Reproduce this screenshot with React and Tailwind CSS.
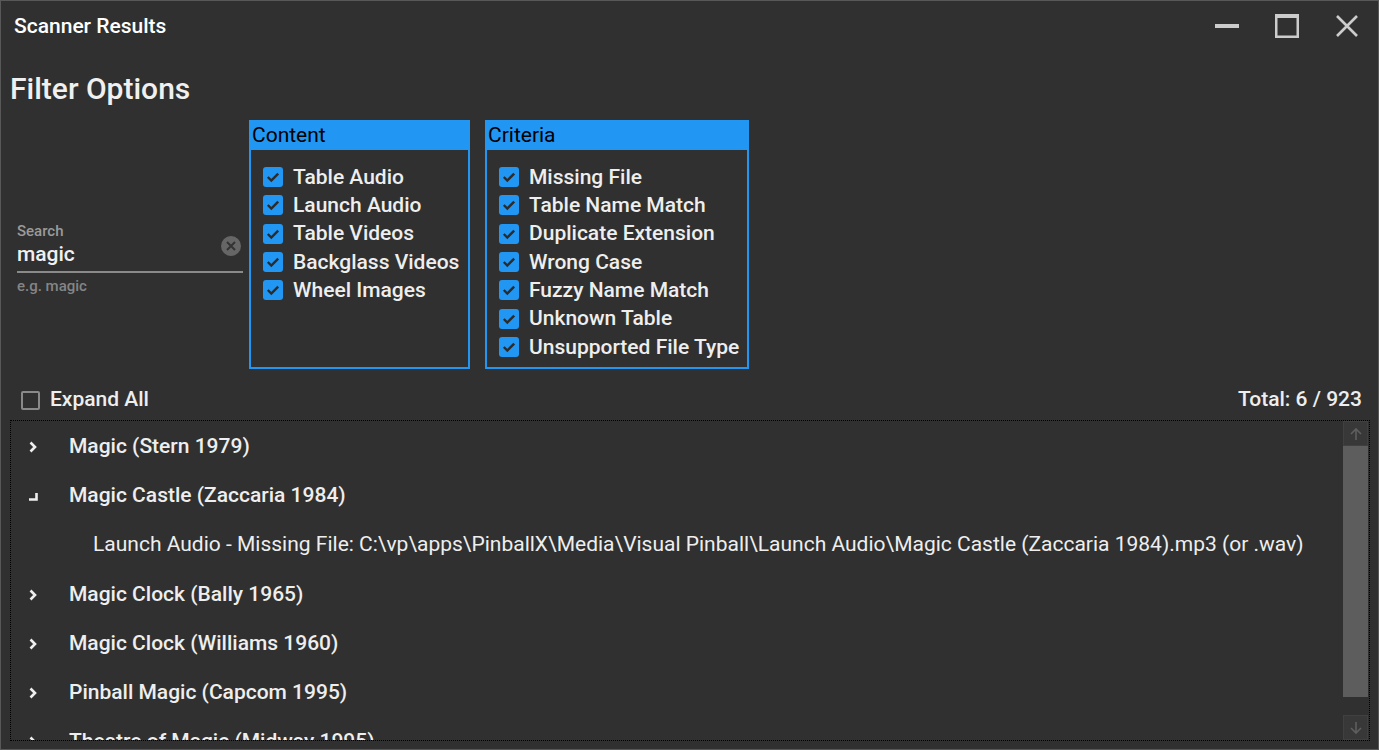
import { useState } from 'react'

const contentItems = ['Table Audio', 'Launch Audio', 'Table Videos', 'Backglass Videos', 'Wheel Images']
const criteriaItems = [
  'Missing File',
  'Table Name Match',
  'Duplicate Extension',
  'Wrong Case',
  'Fuzzy Name Match',
  'Unknown Table',
  'Unsupported File Type',
]

const tables = [
  { name: 'Magic (Stern 1979)' },
  {
    name: 'Magic Castle (Zaccaria 1984)',
    open: true,
    issues: [
      'Launch Audio - Missing File: C:\\vp\\apps\\PinballX\\Media\\Visual Pinball\\Launch Audio\\Magic Castle (Zaccaria 1984).mp3 (or .wav)',
    ],
  },
  { name: 'Magic Clock (Bally 1965)' },
  { name: 'Magic Clock (Williams 1960)' },
  { name: 'Pinball Magic (Capcom 1995)' },
  { name: 'Theatre of Magic (Midway 1995)' },
]

function Check() {
  return (
    <span className="w-[20px] h-[20px] rounded-[3px] bg-[#2196f3] flex items-center justify-center shrink-0">
      <svg width="20" height="20" viewBox="0 0 20 20">
        <path d="M4.8 10 L8.3 13.5 L15.2 6.6" fill="none" stroke="#2b2b2b" strokeWidth="2.4" />
      </svg>
    </span>
  )
}

function GroupBox({ title, items, width }) {
  return (
    <div className={`${width} h-[249px] border-2 border-[#2196f3] flex flex-col`}>
      <div className="h-[30px] bg-[#2196f3] text-black text-[21px] leading-[30px] pl-[3px] -mx-[2px] -mt-[2px]">
        {title}
      </div>
      <div className="pt-[13px] pl-[12px] flex flex-col">
        {items.map(item => (
          <div key={item} className="h-[28.33px] flex items-center gap-[10px]">
            <Check />
            <span className="text-[21px] font-medium text-[#eeeeee] leading-none whitespace-nowrap">{item}</span>
          </div>
        ))}
      </div>
    </div>
  )
}

export default function App() {
  const [search] = useState('magic')

  return (
    <div
      className="w-[1379px] h-[750px] bg-[#303030] border border-[#585858] flex flex-col overflow-hidden text-[#eeeeee]"
      style={{ fontFamily: 'Roboto, "Noto Sans", sans-serif' }}
    >
      {/* title bar */}
      <div className="h-[50px] flex items-center pl-[13px] pt-[2px] shrink-0">
        <span className="text-[21px] font-medium text-white">Scanner Results</span>
        <div className="ml-auto flex items-center h-full -mt-[2px]">
          <div className="w-[60px] flex justify-center">
            <svg width="26" height="26" viewBox="0 0 26 26">
              <rect x="1" y="11" width="24" height="4" fill="#cccccc" />
            </svg>
          </div>
          <div className="w-[60px] flex justify-center">
            <svg width="26" height="26" viewBox="0 0 26 26">
              <rect x="2.25" y="2.25" width="21.5" height="21.5" fill="none" stroke="#cccccc" strokeWidth="2.5" />
              <rect x="1" y="1" width="24" height="4" fill="#cccccc" />
            </svg>
          </div>
          <div className="w-[60px] flex justify-center mr-[1px]">
            <svg width="24" height="24" viewBox="0 0 24 24">
              <path d="M2 2 L22 22 M22 2 L2 22" stroke="#cccccc" strokeWidth="2.6" />
            </svg>
          </div>
        </div>
      </div>

      <div className="pl-[9px] pt-[20px] text-[30px] font-medium leading-[36px] text-[#f0f0f0]">Filter Options</div>

      {/* filters */}
      <div className="flex mt-[13px] shrink-0">
        <div className="w-[248px] pl-[16px] pr-[6px] pt-[103px]">
          <div className="text-[15px] font-medium text-[#9a9a9a] leading-[17px]">Search</div>
          <div className="flex items-center border-b-2 border-[#8a8a8a] pb-[4px]">
            <span className="text-[21px] font-medium leading-[26px] text-[#f0f0f0] flex-1 pt-[1px]">{search}</span>
            <span className="w-[20px] h-[20px] rounded-full bg-[#666666] flex items-center justify-center -mt-[16px] mr-[2px]">
              <svg width="10" height="10" viewBox="0 0 10 10">
                <path d="M1 1 L9 9 M9 1 L1 9" stroke="#333333" strokeWidth="2" />
              </svg>
            </span>
          </div>
          <div className="text-[15px] font-medium text-[#858585] mt-[5px] leading-[17px]">e.g. magic</div>
        </div>
        <GroupBox title="Content" items={contentItems} width="w-[221px]" />
        <div className="w-[15px]" />
        <GroupBox title="Criteria" items={criteriaItems} width="w-[264px]" />
      </div>

      {/* expand + total */}
      <div className="flex items-center h-[30px] mt-[16px] pl-[20px] pr-[16px] shrink-0">
        <span className="w-[19px] h-[19px] border-2 border-[#8a8a8a] rounded-[2px]" />
        <span className="ml-[10px] text-[21px] font-medium">Expand All</span>
        <span className="ml-auto text-[21px] font-medium">Total: 6 / 923</span>
      </div>

      {/* tree list */}
      <div className="ml-[9px] mr-[8px] mt-[5px] h-[321px] border border-dotted border-black flex overflow-hidden">
        <div className="flex-1 flex flex-col overflow-hidden pt-[1px]">
          {tables.map(t => (
            <div key={t.name}>
              <div className="h-[49px] flex items-center shrink-0">
                <div className="w-[58px] pl-[18px]">
                  {t.open ? (
                    <svg width="10" height="12" viewBox="0 0 10 12">
                      <path d="M0 9.5 L7.5 9.5 L7.5 3" fill="none" stroke="#eeeeee" strokeWidth="2.6" />
                    </svg>
                  ) : (
                    <svg width="10" height="12" viewBox="0 0 10 12">
                      <path d="M1.5 1.5 L6 6 L1.5 10.5" fill="none" stroke="#eeeeee" strokeWidth="2.6" />
                    </svg>
                  )}
                </div>
                <span className="text-[21px] font-medium whitespace-nowrap">{t.name}</span>
              </div>
              {t.open &&
                t.issues.map(i => (
                  <div key={i} className="h-[50px] flex items-center pl-[82px]">
                    <span className="text-[21px] whitespace-nowrap">{i}</span>
                  </div>
                ))}
            </div>
          ))}
        </div>
        {/* scrollbar */}
        <div className="w-[25px] flex flex-col shrink-0 mr-[1px]">
          <div className="h-[25px] bg-[#383838] border border-[#404040] flex items-center justify-center">
            <svg width="14" height="14" viewBox="0 0 14 14">
              <path d="M7 13 L7 2 M2 7 L7 2 L12 7" fill="none" stroke="#5e5e5e" strokeWidth="1.6" />
            </svg>
          </div>
          <div className="h-[251px] bg-[#5d5d5d]" />
          <div className="flex-1" />
          <div className="h-[25px] bg-[#383838] border border-[#404040] flex items-center justify-center">
            <svg width="14" height="14" viewBox="0 0 14 14">
              <path d="M7 1 L7 12 M2 7 L7 12 L12 7" fill="none" stroke="#5e5e5e" strokeWidth="1.6" />
            </svg>
          </div>
        </div>
      </div>
    </div>
  )
}
